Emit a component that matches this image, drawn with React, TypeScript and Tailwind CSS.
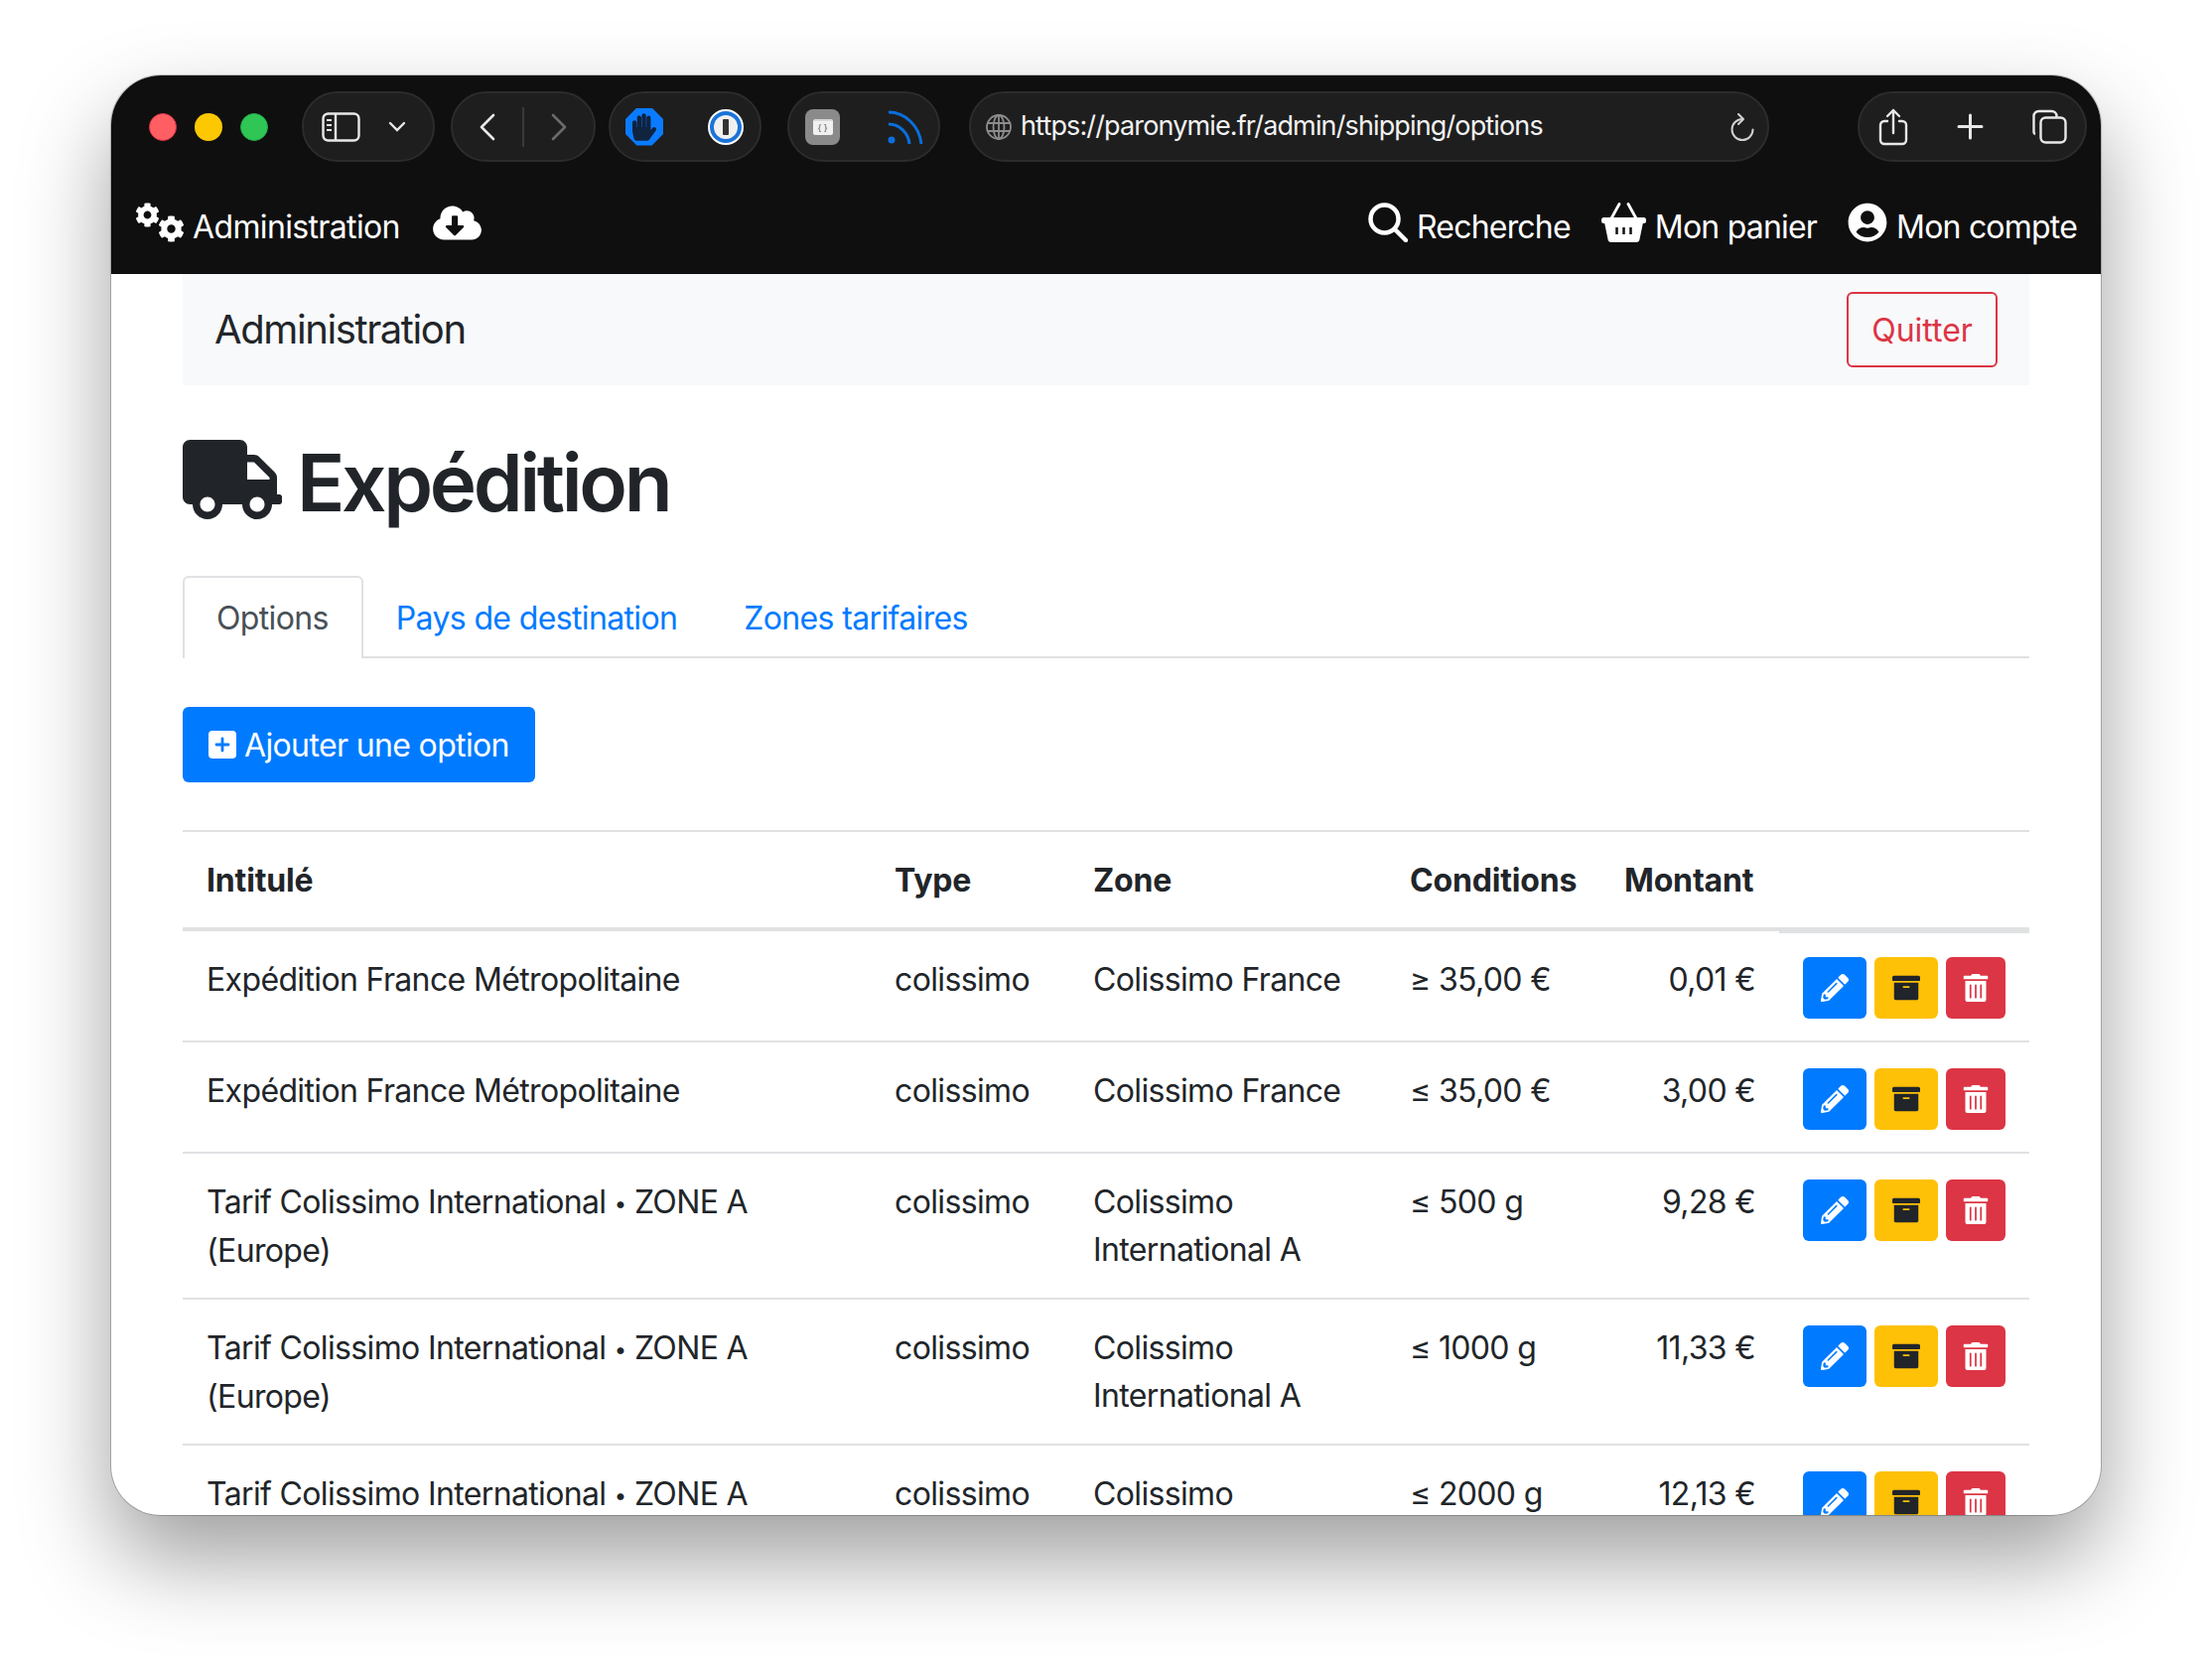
import {
  FaArchive,
  FaCloudDownloadAlt,
  FaCog,
  FaHandPaper,
  FaPencilAlt,
  FaTrashAlt,
  FaTruck,
  FaUserCircle,
} from "react-icons/fa";

interface Row {
  title: string[];
  zone: string[];
  condition: string;
  amount: string;
}

const rows: Row[] = [
  { title: ["Expédition France Métropolitaine"], zone: ["Colissimo France"], condition: "≥ 35,00 €", amount: "0,01 €" },
  { title: ["Expédition France Métropolitaine"], zone: ["Colissimo France"], condition: "≤ 35,00 €", amount: "3,00 €" },
  { title: ["Tarif Colissimo International • ZONE A", "(Europe)"], zone: ["Colissimo", "International A"], condition: "≤ 500 g", amount: "9,28 €" },
  { title: ["Tarif Colissimo International • ZONE A", "(Europe)"], zone: ["Colissimo", "International A"], condition: "≤ 1000 g", amount: "11,33 €" },
  { title: ["Tarif Colissimo International • ZONE A", "(Europe)"], zone: ["Colissimo", "International A"], condition: "≤ 2000 g", amount: "12,13 €" },
];

function ToolGroup({ className, children }: { className: string; children: React.ReactNode }) {
  return (
    <div className={`flex h-[71px] shrink-0 items-center rounded-[36px] border-2 border-[#2c2c2c] bg-[#1e1e1e] ${className}`}>
      {children}
    </div>
  );
}

function Toolbar() {
  return (
    <div className="flex h-[87px] items-start pt-[16px]">
      <div className="ml-[38px] mt-[22px] flex gap-[18px]">
        <span className="h-[28px] w-[28px] rounded-full border border-[#e0334a] bg-[#ff5f63]" />
        <span className="h-[28px] w-[28px] rounded-full bg-[#fdc702]" />
        <span className="h-[28px] w-[28px] rounded-full border border-[#22a94b] bg-[#2fc655]" />
      </div>
      <ToolGroup className="ml-[34px] w-[134px] pl-[18px]">
        <svg width="39" height="30" viewBox="0 0 39 30" fill="none" stroke="#e8e8e8" strokeWidth="2.4">
          <rect x="1.500" y="1.500" width="36" height="27" rx="5" />
          <path d="M14 1.500v27" />
          <path d="M5 8h5M5 13h5M5 18h5" strokeWidth="2.2" />
        </svg>
        <svg className="ml-[28px]" width="18" height="12" viewBox="0 0 18 12" fill="none" stroke="#e8e8e8" strokeWidth="2.4" strokeLinecap="round">
          <path d="M2 2l7 7 7-7" />
        </svg>
      </ToolGroup>
      <ToolGroup className="ml-[16px] w-[146px] pl-[27px]">
        <svg width="16" height="28" viewBox="0 0 16 28" fill="none" stroke="#e8e8e8" strokeWidth="2.6" strokeLinecap="round" strokeLinejoin="round">
          <path d="M14 2L2 14l12 12" />
        </svg>
        <span className="ml-[27px] h-[40px] w-[2px] bg-[#3a3a3a]" />
        <svg className="ml-[27px]" width="16" height="28" viewBox="0 0 16 28" fill="none" stroke="#6b6b6b" strokeWidth="2.6" strokeLinecap="round" strokeLinejoin="round">
          <path d="M2 2l12 12L2 26" />
        </svg>
      </ToolGroup>
      <ToolGroup className="ml-[13px] w-[154px] pl-[15px]">
        <span className="flex h-[38px] w-[38px] items-center justify-center bg-[#0a7bff] [clip-path:polygon(30%_0,70%_0,100%_30%,100%_70%,70%_100%,30%_100%,0_70%,0_30%)]">
          <FaHandPaper className="h-[28px] w-[24px] -scale-x-100 text-[#10233f]" />
        </span>
        <span className="ml-[45px] flex h-[36px] w-[36px] items-center justify-center rounded-full border-[2px] border-white bg-[#1a74d8]">
          <span className="flex h-[24px] w-[24px] items-center justify-center rounded-full bg-[#f0f0f0]">
            <span className="h-[16px] w-[6px] rounded-[1px] bg-[#333]" />
          </span>
        </span>
      </ToolGroup>
      <ToolGroup className="ml-[26px] w-[154px] pl-[16px]">
        <span className="flex h-[36px] w-[35px] items-center justify-center rounded-[8px] bg-[#8a8a8a]">
          <span className="flex h-[16px] w-[20px] items-center justify-center rounded-[2px] border-t-2 border-[#d8d8d8] bg-[#f0f0f0] text-[9px] leading-none text-[#555]">
            {"{ }"}
          </span>
        </span>
        <svg className="ml-[48px]" width="36" height="36" viewBox="0 0 36 36" fill="none" stroke="#0a6fdc" strokeWidth="3">
          <path d="M1 3c17 0 31 14 33 32" />
          <path d="M1 15c11 0 20 9 21 20" />
          <circle cx="4" cy="31" r="3.500" fill="#0a6fdc" stroke="none" />
        </svg>
      </ToolGroup>
      <ToolGroup className="ml-[29px] w-[806px] pl-[14px]">
        <svg width="28" height="28" viewBox="0 0 28 28" fill="none" stroke="#8c8c8c" strokeWidth="1.800">
          <circle cx="14" cy="14" r="12" />
          <ellipse cx="14" cy="14" rx="5.500" ry="12" />
          <path d="M14 2v24M2.500 10h23M2.500 18h23" />
        </svg>
        <span className="ml-[8px] text-[27px] tracking-[-0.032em] text-[#f2f2f2]">https://paronymie.fr/admin/shipping/options</span>
        <svg className="ml-auto mr-[13px]" width="24" height="28" viewBox="0 0 24 28" fill="none" stroke="#d0d0d0" strokeWidth="2" strokeLinecap="round" strokeLinejoin="round">
          <path d="M12 6a10.500 10.500 0 1010.500 10.500" />
          <path d="M8 1l5 5-5 5" />
        </svg>
      </ToolGroup>
      <ToolGroup className="ml-[89px] w-[231px] pl-[19px]">
        <svg width="30" height="38" viewBox="0 0 30 38" fill="none" stroke="#e8e8e8" strokeWidth="2.400" strokeLinecap="round" strokeLinejoin="round">
          <path d="M9 13H6a4 4 0 00-4 4v15a4 4 0 004 4h18a4 4 0 004-4V17a4 4 0 00-4-4h-3" />
          <path d="M15 25V2M9 8l6-6 6 6" />
        </svg>
        <svg className="ml-[49px]" width="27" height="27" viewBox="0 0 27 27" stroke="#e8e8e8" strokeWidth="3" strokeLinecap="round">
          <path d="M13.500 2v23M2 13.500h23" />
        </svg>
        <svg className="ml-[49px]" width="35" height="35" viewBox="0 0 35 35" fill="none" stroke="#e8e8e8" strokeWidth="2.400">
          <path d="M3 25a2 2 0 01-1.500-2V7a5 5 0 015-5h13a5 5 0 015 5v1" />
          <rect x="8.500" y="8.500" width="25" height="25" rx="5" />
        </svg>
      </ToolGroup>
    </div>
  );
}

function SiteNav() {
  return (
    <nav className="flex h-[113px] items-start justify-between px-[24px] pt-[42px] text-[32px] leading-[48px] tracking-[-0.02em] text-white">
      <div className="flex items-center">
        <div className="-mt-[10px] flex h-[40px] w-[50px]">
          <FaCog className="h-[25px] w-[25px] shrink-0 self-start" />
          <FaCog className="-ml-[2px] h-[27px] w-[27px] shrink-0 self-end" />
        </div>
        <span className="ml-[8px]">Administration</span>
        <FaCloudDownloadAlt className="-mt-[10px] ml-[33px] h-[39px] w-[49px]" />
      </div>
      <div className="flex items-center tracking-[-0.025em]">
        <svg className="-mt-[10px]" width="40" height="40" viewBox="0 0 40 40" fill="none" stroke="currentColor" strokeWidth="4.500" strokeLinecap="round">
          <circle cx="16.500" cy="16.500" r="14" />
          <path d="M27 27l11 11" />
        </svg>
        <span className="ml-[9px]">Recherche</span>
        <svg className="-mt-[10px] ml-[31px]" width="45" height="40" viewBox="0 0 45 40" fill="currentColor">
          <path d="M18 1.500L10 16M27 1.500L35 16" fill="none" stroke="currentColor" strokeWidth="2.800" strokeLinecap="round" />
          <rect x="0" y="15" width="45" height="6" rx="2.500" />
          <path d="M3 20h39l-3.500 17a3.500 3.500 0 01-3.500 3H10a3.500 3.500 0 01-3.500-3z" />
          <path d="M15.500 25v7M22.500 25v7M29.500 25v7" stroke="#0f0f0f" strokeWidth="2.500" />
        </svg>
        <span className="ml-[9px]">Mon panier</span>
        <FaUserCircle className="-mt-[10px] ml-[31px] h-[40px] w-[40px]" />
        <span className="ml-[9px]">Mon compte</span>
      </div>
    </nav>
  );
}

function ActionButton({ className, children }: { className: string; children: React.ReactNode }) {
  return <button className={`flex h-[62px] items-center justify-center rounded-[6px] text-[28px] ${className}`}>{children}</button>;
}

// the bullet is smaller in the reference than Inter's
function TitleLine({ line }: { line: string }) {
  const parts = line.split("•");
  if (parts.length === 1) return <div>{line}</div>;
  return (
    <div>
      {parts[0]}
      <span className="align-[0.1em] text-[22px]">•</span>
      {parts[1]}
    </div>
  );
}

function OptionsTable() {
  const th = "border-t-2 border-b-4 border-[#e0e1e3] px-[24px] pt-[25px] pb-[23px] font-bold tracking-[-0.005em]";
  const td = "border-b-2 border-[#e0e1e3] px-[24px] pt-[25px] pb-[23px]";
  return (
    <table className="mt-[48px] w-full table-fixed border-separate border-spacing-0 text-left">
      <colgroup>
        <col className="w-[693px]" />
        <col className="w-[200px]" />
        <col className="w-[319px]" />
        <col className="w-[216px]" />
        <col className="w-[180px]" />
        <col className="w-[252px]" />
      </colgroup>
      <thead>
        <tr>
          <th className={th}>Intitulé</th>
          <th className={th}>Type</th>
          <th className={th}>Zone</th>
          <th className={th}>Conditions</th>
          <th className={th}>Montant</th>
          <th className="relative border-t-2 border-b-4 border-[#e0e1e3] after:absolute after:inset-x-0 after:top-[calc(100%+4px)] after:h-[2px] after:bg-[#e0e1e3]" />
        </tr>
      </thead>
      <tbody>
        {rows.map((row, i) => (
          <tr key={i} className="align-top">
            <td className={td}>
              {row.title.map((line) => (
                <TitleLine key={line} line={line} />
              ))}
            </td>
            <td className={td}>colissimo</td>
            <td className={td}>
              {row.zone.map((line) => (
                <div key={line}>{line}</div>
              ))}
            </td>
            <td className={td}>{row.condition}</td>
            <td className={`${td} text-right`}>{row.amount}</td>
            <td className="border-b-2 border-[#e0e1e3] px-[24px] pt-[26px] pb-[22px]">
              <div className="flex gap-[8px]">
                <ActionButton className="w-[64px] bg-[#007bff] text-white">
                  <FaPencilAlt />
                </ActionButton>
                <ActionButton className="w-[64px] bg-[#ffc107] text-[#212529]">
                  <FaArchive />
                </ActionButton>
                <ActionButton className="w-[60px] bg-[#dc3545] text-white">
                  <FaTrashAlt />
                </ActionButton>
              </div>
            </td>
          </tr>
        ))}
      </tbody>
    </table>
  );
}

export default function App() {
  return (
    <div className="h-[1674px] overflow-hidden bg-white pl-[112px] pt-[76px] [font-family:Inter,sans-serif]">
      <div className="h-[1450px] w-[2004px] overflow-hidden rounded-[50px] bg-white shadow-[0_0_0_1px_rgba(0,0,0,0.22),0_44px_90px_rgba(0,0,0,0.38)]">
        <header className="bg-[#0f0f0f]">
          <Toolbar />
          <SiteNav />
        </header>
        <main className="px-[72px] text-[32px] leading-[48px] tracking-[-0.02em] text-[#212529]">
          <div className="flex h-[112px] items-center justify-between bg-[#f8f9fa] px-[32px]">
            <span className="text-[40px] leading-[60px] tracking-[-0.035em]">Administration</span>
            <button className="h-[76px] w-[152px] rounded-[6px] border-2 border-[#dc3545] pt-[2px] tracking-normal text-[#dc3545]">Quitter</button>
          </div>
          <h1 className="mt-[47px] flex h-[96px] items-center text-[80px] font-semibold leading-[96px] tracking-[-0.042em]">
            <FaTruck className="h-[80px] w-[100px]" />
            <span className="ml-[15px] pt-[5px]">Expédition</span>
          </h1>
          <div className="mt-[49px] flex h-[83px] border-b-2 border-[#e0e1e3]">
            <div className="h-[83px] rounded-t-[6px] border-2 border-b-0 border-[#e0e1e3] bg-white pl-[32px] pr-[33px] pt-[17px] text-[#495057]">Options</div>
            <div className="pl-[33px] pr-[31px] pt-[19px] text-[#007bff]">Pays de destination</div>
            <div className="px-[36px] pt-[19px] text-[#007bff]">Zones tarifaires</div>
          </div>
          <button className="mt-[49px] flex h-[76px] w-[355px] items-center rounded-[6px] bg-[#007bff] pl-[26px] text-white">
            <svg width="28" height="28" viewBox="0 0 28 28">
              <rect width="28" height="28" rx="4" fill="white" />
              <path d="M14 8v12M8 14h12" stroke="#007bff" strokeWidth="2.800" strokeLinecap="round" />
            </svg>
            <span className="ml-[8px] pt-[2px]">Ajouter une option</span>
          </button>
          <OptionsTable />
        </main>
      </div>
    </div>
  );
}
